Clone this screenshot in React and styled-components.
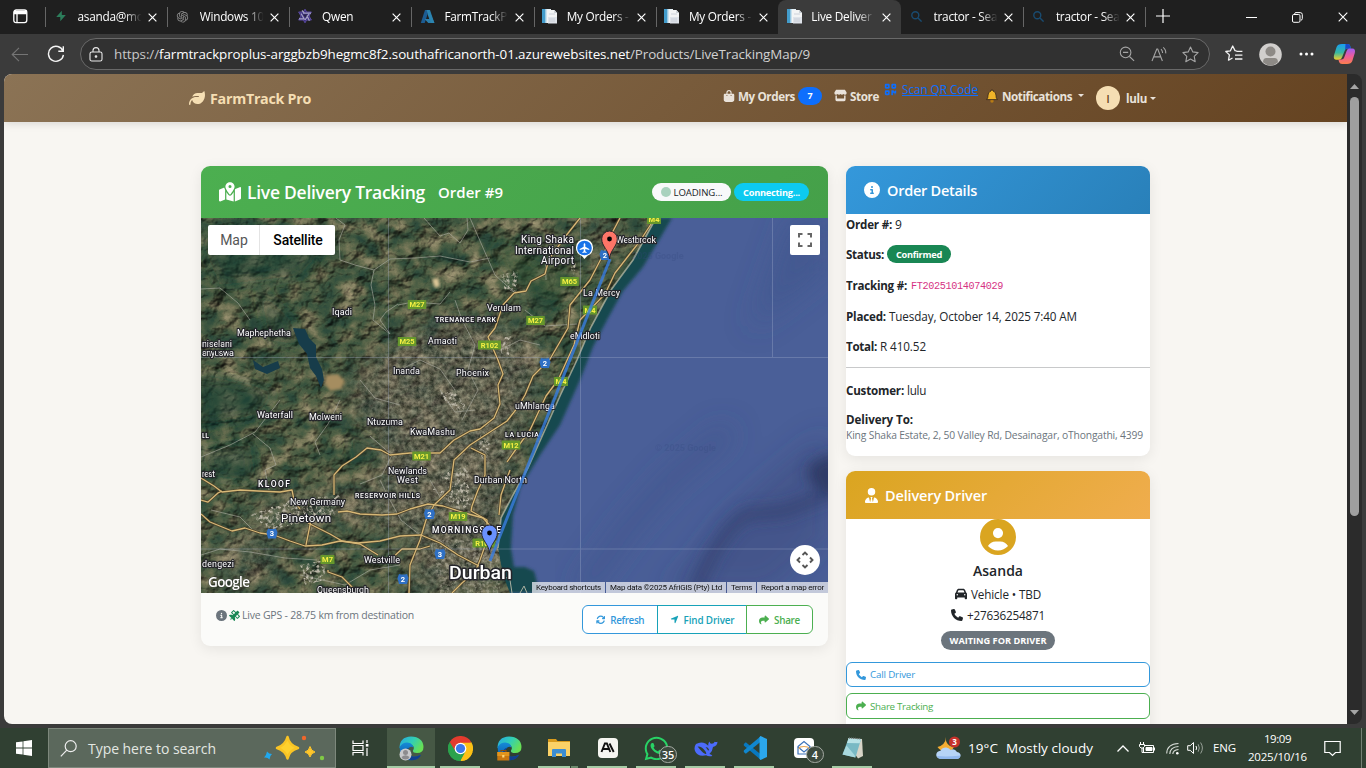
import React, { useLayoutEffect, useRef, useState } from 'react';
import styled, { createGlobalStyle } from 'styled-components';
import {
  FaLeaf, FaBagShopping, FaStore, FaQrcode, FaMapLocationDot, FaCircleInfo, FaUserTie,
  FaCircleUser, FaCar, FaPhone, FaShare, FaArrowsRotate, FaLocationArrow, FaSatellite, FaWhatsapp,
} from 'react-icons/fa6';
import { AiOutlineOpenAI } from 'react-icons/ai';

const Global = createGlobalStyle`
  * { box-sizing: border-box; }
  html, body { margin: 0; padding: 0; }
  body {
    width: 1366px; height: 768px; overflow: hidden; background: #3b3b3b;
    font-family: "Open Sans", "Noto Sans", sans-serif; font-size: 12px; color: #212529;
  }
  svg { display: block; flex: none; }
`;

/* ---------- text that keeps a given line width ---------- */
const FitBox = styled.span`
  display: inline-block;
  flex: none;
  white-space: nowrap;
  width: ${(p) => p.$w}px;
  font-size: ${(p) => (p.$size ? `${p.$size}px` : 'inherit')};
  font-weight: ${(p) => p.$weight || 'inherit'};
  color: ${(p) => p.$color || 'inherit'};
`;

function Fit({ w, size, weight, color, children }) {
  const ref = useRef(null);
  const [spacing, setSpacing] = useState(0);
  useLayoutEffect(() => {
    const natural = ref.current.getBoundingClientRect().width;
    setSpacing((w - natural) / Math.max(1, String(children).length));
  }, [w, children]);
  return (
    <FitBox $w={w} $size={size} $weight={weight} $color={color}>
      <span ref={ref} style={{ letterSpacing: `${spacing}px` }}>{children}</span>
    </FitBox>
  );
}

/* ---------- browser chrome ---------- */
const Screen = styled.div`
  width: 1366px; height: 768px; display: flex; flex-direction: column; overflow: hidden;
`;
const TabStrip = styled.div`
  height: 34px; background: #1f1f1f; display: flex; align-items: stretch; flex: none;
`;
const TabMenu = styled.div`
  width: 44.5px; padding: 9px 0 0 13px;
`;
const Tab = styled.div`
  width: 122.3px; display: flex; align-items: center; padding: 0 10px 2px 8px; color: #fff;
  position: relative;
  background: ${(p) => (p.$active ? '#3b3b3b' : 'transparent')};
  border-radius: ${(p) => (p.$active ? '8px 8px 0 0' : '0')};
  &::before {
    content: ''; position: absolute; left: 0; top: 7px; width: 1px; height: 20px;
    background: ${(p) => (p.$line ? '#666' : 'transparent')};
  }
`;
const Favicon = styled.div`
  width: 16px; display: flex; justify-content: center; margin-right: 9px;
`;
const TabTitle = styled.div`
  width: 65px; overflow: hidden; white-space: nowrap; font-size: 11.8px; letter-spacing: -0.25px; line-height: 16px;
  mask-image: linear-gradient(90deg, #000 72%, transparent 98%);
`;
const TabClose = styled.div`
  margin-left: auto; padding-top: 2px;
`;
const StripEnd = styled.div`
  flex: 1; display: flex; align-items: center; color: #fff; padding: 0 18px 2px 10px; position: relative;
  border-left: 1px solid #1f1f1f;
  &::before { content: ''; position: absolute; left: -1px; top: 7px; width: 1px; height: 20px; background: #666; }
`;
const WindowButtons = styled.div`
  margin-left: auto; display: flex; align-items: center; gap: 35px; padding-top: 2px;
`;
const Toolbar = styled.div`
  height: 40px; background: #3b3b3b; display: flex; align-items: center; flex: none; padding-left: 11px;
`;
const ReloadIcon = styled.svg`
  margin-left: 19px;
`;
const AddressBar = styled.div`
  width: 1130px; height: 32px; margin: 0 0 0 15px; border: 1px solid #696969; border-radius: 16px; background: #313131;
  display: flex; align-items: center; color: #fff; padding: 0 10px 0 8px;
`;
const BarTools = styled.div`
  margin-left: auto; display: flex; align-items: center; gap: 15px;
`;
const ToolbarEnd = styled.div`
  display: flex; align-items: center; padding-left: 15px;
  & > :nth-child(2) { margin-left: 15px; }
  & > :nth-child(3) { margin-left: 17px; }
  & > :nth-child(4) { margin-left: 19px; }
`;
const UrlText = styled.div`
  display: flex; margin-left: 11px; padding-bottom: 1px;
`;
const Window = styled.div`
  height: 650px; margin: 0 4px; border-radius: 8px; overflow: hidden; display: flex; flex: none;
`;
const Page = styled.div`
  width: 1343px; background: #f8f6f2; overflow: hidden;
`;
const Scrollbar = styled.div`
  width: 15px; background: #2b2b2b; display: flex; flex-direction: column; align-items: center; justify-content: space-between;
  padding: 10px 0 9px;
`;
const ScrollThumb = styled.div`
  width: 9px; height: 419px; margin: 8px 0 auto; border-radius: 5px; background: #9f9f9f;
`;

const CloseX = ({ size = 9, w = 1.3 }) => (
  <svg width={size} height={size} viewBox="0 0 10 10" stroke="#fff" strokeWidth={w} fill="none"><path d="M.7 .7 9.3 9.3M9.3 .7.7 9.3" /></svg>
);
const DocIcon = () => (
  <svg width="17" height="17" viewBox="0 0 17 17">
    <path d="M1 1h9v14H1z" fill="#e6f1f7" /><path d="M1 1h3.6v14H1z" fill="#439ccb" /><path d="M4.6 1h1v14h-1z" fill="#b8d8e8" />
    <path d="M6 2h7.5l2.5 3v10H6z" fill="#f3f4f5" /><path d="M13.2 2v3H16z" fill="#c6ccd2" />
    <path d="M7 9h9v6.5H7z" fill="#dfe3ea" /><path d="M8 6h6M8 11h6M8 13h6" stroke="#c3c9d3" strokeWidth=".8" />
  </svg>
);
const SupaIcon = () => (
  <svg width="12" height="12" viewBox="0 0 12 12"><path d="M6.8.8v4.3h4L5.3 11.2V6.9H1.2z" fill="#2c7d5b" /></svg>
);
const QwenIcon = () => (
  <svg width="16" height="16" viewBox="0 0 16 16" fill="none" strokeLinejoin="round">
    <path d="M8 1.2 9.6 4h4.8L12 8l2.4 4H9.6L8 14.8 6.4 12H1.6L4 8 1.6 4h4.8z" fill="#3d3080" stroke="#5b4aa0" strokeWidth="1" />
    <path d="M5 2.5 7.6 5.400M14 5.2H6M12.4 12.7 9.800 7.500M2 10.8h5M4 5.500l3.5 6M8 12l4-6" stroke="#a5a1c4" strokeWidth="1.3" />
    <path d="M6.2 6.500h4L8.2 9.6z" fill="#2b2744" />
  </svg>
);
const AzureIcon = () => (
  <svg width="15" height="15" viewBox="0 0 15 15"><path d="M5 1h4L4.7 14H.8z" fill="#1c5c92" /><path d="M9 1h1l4.4 13H8.3L4.6 10h4.7L7.7 5.5z" fill="#2a7dab" /><path d="M6.5 1H9l5.4 13h-3.2z" fill="#2c85b0" /></svg>
);
const LoupeIcon = ({ size = 11, color = '#194b70', w = 1.4 }) => (
  <svg width={size} height={size} viewBox="0 0 11 11" fill="none" stroke={color} strokeWidth={w}><circle cx="4.3" cy="4.3" r="3.5" /><path d="m7 7 3.6 3.6" /></svg>
);
const Star = ({ size = 17, color = '#a5a5a5' }) => (
  <svg width={size} height={size} viewBox="0 0 17 17" fill="none" stroke={color} strokeWidth="1.1" strokeLinejoin="round"><path d="m8.5 1 2.3 4.9 5.3.7-3.9 3.7 1 5.4-4.7-2.6-4.7 2.6 1-5.4L.9 6.6l5.3-.7z" /></svg>
);

const TABS = [
  ['asanda@mo', SupaIcon], ['Windows 10', () => <AiOutlineOpenAI size={15} color="#858585" />], ['Qwen', QwenIcon],
  ['FarmTrackP', AzureIcon], ['My Orders -', DocIcon], ['My Orders -', DocIcon],
  ['Live Deliver', DocIcon], ['tractor - Sea', LoupeIcon], ['tractor - Sea', LoupeIcon],
];

function BrowserChrome() {
  return (
    <>
      <TabStrip>
        <TabMenu>
          <svg width="15" height="15" viewBox="0 0 15 15" fill="none" stroke="#fff" strokeWidth="1.3"><rect x=".8" y="1" width="13" height="12.6" rx="2.4" /><path d="M1 2.8h12.7M1 4.3h12.7" strokeWidth="2" /><path d="M4 4v9.5" /></svg>
        </TabMenu>
        {TABS.map(([title, Icon], i) => (
          <Tab key={i} $active={i === 6} $line={i !== 6 && i !== 7}>
            <Favicon><Icon /></Favicon><TabTitle>{title}</TabTitle><TabClose><CloseX /></TabClose>
          </Tab>
        ))}
        <StripEnd>
          <svg width="14" height="14" viewBox="0 0 14 14" stroke="#fff" strokeWidth="1.2"><path d="M7 0v14M0 7h14" /></svg>
          <WindowButtons>
            <svg width="11" height="11" viewBox="0 0 11 11" stroke="#fff"><path d="M0 5.5h11" /></svg>
            <svg width="11" height="11" viewBox="0 0 11 11" fill="none" stroke="#fff"><rect x=".5" y="2.5" width="7.5" height="7.8" rx="1.3" /><path d="M2.6 2.4V1.8Q2.7.6 4 .6h4.2Q10.3.6 10.3 2.6v4Q10.3 8 9 8.2" /></svg>
            <CloseX size={10} w={1.1} />
          </WindowButtons>
        </StripEnd>
      </TabStrip>
      <Toolbar>
        <svg width="17" height="15" viewBox="0 0 17 15" fill="none" stroke="#757575" strokeWidth="1.1"><path d="M17 7.5H1.2M8 .8 1.2 7.5 8 14.2" /></svg>
        <ReloadIcon width="18" height="18" viewBox="0 0 18 18" fill="none" stroke="#f4f4f4" strokeWidth="1.4"><path d="M16 6.2A7.5 7.5 0 1 0 16.4 9.8M16.3 1.2v5h-5" /></ReloadIcon>
        <AddressBar>
          <svg width="14" height="15" viewBox="0 0 14 15" fill="none" stroke="#e8e8e8" strokeWidth="1.1"><rect x="1" y="5" width="12" height="9" rx="1.8" /><path d="M4 5V3.6a3 3 0 0 1 6 0V5" /><circle cx="7" cy="9.5" r=".8" fill="#fff" /></svg>
          <UrlText>
            <Fit w={45} size={13.4} color="#c8c8c8">https://</Fit>
            <Fit w={471} size={13.4}>farmtrackproplus-arggbzb9hegmc8f2.southafricanorth-01.azurewebsites.net</Fit>
            <Fit w={180} size={13.4} color="#d2d2d2">/Products/LiveTrackingMap/9</Fit>
          </UrlText>
          <BarTools>
            <svg width="16" height="16" viewBox="0 0 16 16" fill="none" stroke="#a5a5a5" strokeWidth="1.1"><circle cx="6.6" cy="6.4" r="5.3" /><path d="m10.5 10.5 4.6 4.4M4 6.4h5.2" /></svg>
            <svg width="17" height="17" viewBox="0 0 17 17" fill="none" stroke="#a5a5a5" strokeWidth="1.1"><path d="M2 15 6.800 3h.9l4.7 12M3.7 10.9h7M11 3.2q1.6 1.6 1.6 3.8M13.2 1.4q3 2.4 2.5 6" /></svg>
            <Star />
          </BarTools>
        </AddressBar>
        <ToolbarEnd>
          <svg width="19" height="18" viewBox="0 0 19 18" fill="none" stroke="#f3f3f3" strokeWidth="1.3" strokeLinejoin="round"><path d="M11.5 5.8 10 5.6 7.7 1 5.4 5.8.8 6.5l3.6 3.4-.9 5.3 4-2.2M11.4 6.4h6M10 10.2h7.4M10 14h7.4" /></svg>
          <svg width="23" height="23" viewBox="0 0 23 23"><circle cx="11.5" cy="11.5" r="11.3" fill="#d1cfcd" /><circle cx="11.5" cy="8.5" r="5" fill="#8d8a86" /><path d="M4 19.2q.2-4.2 3.4-4.2h8.2q3.2 0 3.4 4.2-7.5 6.5-15 0z" fill="#8d8a86" /></svg>
          <svg width="15" height="4" viewBox="0 0 15 4" fill="#fff"><circle cx="2" cy="2" r="1.5" /><circle cx="7.5" cy="2" r="1.5" /><circle cx="13" cy="2" r="1.5" /></svg>
          <svg width="23" height="22" viewBox="0 0 23 22">
            <defs>
              <linearGradient id="copA" x1="0" y1="0" x2="0" y2="1"><stop offset="0" stopColor="#189ef2" /><stop offset=".55" stopColor="#38b8a0" /><stop offset="1" stopColor="#f1cf2c" /></linearGradient>
              <linearGradient id="copB" x1="0" y1="0" x2="0" y2="1"><stop offset="0" stopColor="#a05cf2" /><stop offset=".5" stopColor="#ee5c9a" /><stop offset="1" stopColor="#fb7e4d" /></linearGradient>
            </defs>
            <path d="M9 1h5.6q2.2 0 2.6 2l.6 2.6h-3.4q-2.1 0-2.8 2.4L9.2 14q-.8 2.7-3 2.7H3.6Q0 16.7 1 12.2L3.6 4Q4.6 1 9 1z" fill="url(#copA)" />
            <path d="M12.5 1h2.4q1.8 0 2.3 2l.7 2.6h-3.5q-1.7 0-2.3 1.6z" fill="#1948c8" />
            <path d="M14 21H9q-2.3 0-2.9-2l-.7-2.4h3.2q2 0 2.7-2.4l2.3-6.3q.9-2.4 3-2.4h2.7q3.5 0 2.5 4.5L19.3 18q-1 3-5.3 3z" fill="url(#copB)" />
          </svg>
        </ToolbarEnd>
      </Toolbar>
    </>
  );
}

/* ---------- site navigation ---------- */
const Navbar = styled.nav`
  height: 48px; padding: 0 191px 0 185px; display: flex; align-items: center;
  background: linear-gradient(135deg, #8b7355, #654321); box-shadow: 0 2px 8px rgba(0,0,0,.12);
`;
const Brand = styled.div`
  display: flex; align-items: center; gap: 5px; color: #f5deb3; font-weight: 700; margin-right: auto;
`;
const NavItem = styled.div`
  display: flex; align-items: center; color: #e9e2da; font-weight: 700; font-size: 11.7px; gap: ${(p) => p.$gap ?? 3}px;
  margin: ${(p) => p.$m || '0'};
`;
const CountBadge = styled.span`
  width: 24px; height: 18px; border-radius: 9px; background: #0d6efd; color: #fff; font-size: 9px; font-weight: 700;
  display: flex; align-items: center; justify-content: center;
`;
const ScanLink = styled.a`
  display: flex; align-items: center; gap: 5px; color: #0d6efd; margin: -18px 8px 0 5px; text-decoration: underline;
`;
const Avatar = styled.span`
  width: 24px; height: 24px; border-radius: 50%; background: #f5deb3; color: #654321; display: flex; align-items: center; justify-content: center;
  font-size: 11px; font-weight: 600;
`;
const Caret = styled.i`
  border: 3px solid transparent; border-top-color: currentColor; border-bottom: 0; margin-left: ${(p) => p.$ml}px;
`;

function SiteNav() {
  return (
    <Navbar>
      <Brand><FaLeaf size={16} /><Fit w={101} size={14.3}>FarmTrack Pro</Fit></Brand>
      <NavItem $m="-5px 0 0"><FaBagShopping size={12} /><Fit w={57}>My Orders</Fit><CountBadge>7</CountBadge></NavItem>
      <NavItem $m="-5px 0 0 12px"><FaStore size={13} /><Fit w={29}>Store</Fit></NavItem>
      <ScanLink><FaQrcode size={13} /><Fit w={76} size={11.8}>Scan QR Code</Fit></ScanLink>
      <NavItem $m="-5px 12px 0 0" $gap={4}>
        <svg width="12" height="14" viewBox="0 0 12 14"><circle cx="6" cy="12" r="1.7" fill="#b87c15" /><path d="M5.2 1h1.6l.2 1q3.2.8 3 4.6-.1 2.6 1.5 4H.5Q2.1 9.200 2 6.600 1.800 2.800 5 2z" fill="#f0b429" stroke="#33261a" strokeWidth=".8" /></svg>
        <Fit w={70}>Notifications</Fit><Caret $ml={2} />
      </NavItem>
      <NavItem $gap={6}><Avatar>l</Avatar><Fit w={21} size={11.6}>lulu</Fit><Caret $ml={-3} /></NavItem>
    </Navbar>
  );
}

/* ---------- cards ---------- */
const Content = styled.main`
  display: flex; gap: 18px; align-items: flex-start; padding: 44px 0 0 197px;
`;
const Card = styled.section`
  width: ${(p) => p.$w}px; height: ${(p) => p.$h}px; background: ${(p) => p.$bg || '#fff'}; border-radius: 9px; overflow: hidden; flex: none;
  box-shadow: 0 3px 14px rgba(0,0,0,.08);
`;
const CardHeader = styled.header`
  height: ${(p) => p.$h}px; padding: 0 19px 0 18px; display: flex; align-items: center; color: #fff; font-weight: 600;
  background: linear-gradient(135deg, ${(p) => p.$from}, ${(p) => p.$to}); gap: ${(p) => p.$gap || 7}px;
`;
const OrderTag = styled.span`
  margin-left: 7px;
`;
const Pill = styled.span`
  height: ${(p) => p.$h || 18}px; width: ${(p) => p.$w}px; border-radius: 10px; background: ${(p) => p.$bg}; color: ${(p) => p.$fg || '#fff'};
  display: inline-flex; align-items: center; justify-content: center; font-size: 9.2px; font-weight: 700; gap: 3px; flex: none;
`;
const PillRow = styled.div`
  margin-left: auto; display: flex; gap: 3px;
`;
const Dot = styled.i`
  width: 10px; height: 10px; border-radius: 50%; background: #a9d2be;
`;
const MapFooter = styled.footer`
  display: flex; justify-content: space-between; align-items: flex-start; padding: 12px 15px;
`;
const GpsNote = styled.div`
  display: flex; align-items: center; gap: 2px; color: #6c757d; margin-top: 2px; line-height: 16px;
`;
const ButtonGroup = styled.div`
  display: flex;
  & > :first-child { border-radius: 6px 0 0 6px; }
  & > :last-child { border-radius: 0 6px 6px 0; }
  & > * + * { margin-left: -1px; }
`;
const GroupButton = styled.button`
  font: 600 9.900px "Open Sans", sans-serif; height: 29px; width: ${(p) => p.$w}px; background: #fff; color: ${(p) => p.$c}; border: 1px solid ${(p) => p.$c};
  display: flex; align-items: center; justify-content: center; gap: 5px; padding: 0;
`;

/* ---------- satellite map ---------- */
const MapFrame = styled.div`
  position: relative; width: 627px; height: 375px; overflow: hidden; font-family: Roboto, sans-serif;
`;
const MapType = styled.div`
  position: absolute; left: 7px; top: 7px; display: flex; height: 30px; background: #fff; border-radius: 2px; font-size: 14px; line-height: 30px;
`;
const MapTypeOption = styled.div`
  width: ${(p) => p.$w}px; text-align: center; color: ${(p) => (p.$on ? '#000' : '#565656')}; font-weight: ${(p) => (p.$on ? 500 : 400)};
  padding-left: 1px; border-left: ${(p) => (p.$on ? '1px solid #e4e4e4' : '0')}; letter-spacing: ${(p) => (p.$on ? '-.2px' : '0')};
`;
const MapButton = styled.div`
  position: absolute; right: 8px; ${(p) => (p.$round ? 'bottom: 18px; border-radius: 50%;' : 'top: 7px; border-radius: 2px;')}
  width: 30px; height: 30px; background: #fff; display: flex; align-items: center; justify-content: center;
`;
const MapCredits = styled.div`
  position: absolute; right: 0; bottom: 0; height: 11px; display: flex; gap: 1px; color: #111; font-size: 8px; line-height: 11px;
`;
const Credit = styled.span`
  background: rgba(225,228,235,.8); width: ${(p) => p.$w}px; display: flex; justify-content: center;
`;

const PLACES = [
  [521, 243, 'King Shaka', 53, 10], [515, 253.500, 'International', 59, 10], [541, 264, 'Airport', 33, 10],
  [616, 242.500, 'Westbrook', 40, 9], [583, 296, 'La Mercy', 37, 9], [487, 310.500, 'Verulam', 34, 9], [570, 338.500, 'eMdloti', 30, 9],
  [332, 314.500, 'Iqadi', 20, 9], [237, 335.500, 'Maphephetha', 54, 9], [202, 346.500, 'niselani', 30, 9], [202, 355.500, 'anyuswa', 32, 9],
  [428, 344, 'Amaoti', 29, 9], [393, 374, 'Inanda', 27, 9], [456, 376, 'Phoenix', 33, 9], [257, 418, 'Waterfall', 36, 9],
  [309, 420, 'Molweni', 33, 9], [367, 425, 'Ntuzuma', 36, 9], [410, 434.500, 'KwaMashu', 45, 9], [515, 408.500, 'uMhlanga', 40, 9],
  [388, 474, 'Newlands', 39, 9], [397, 483, 'West', 21, 9], [474, 483, 'Durban North', 53, 9], [290, 505, 'New Germany', 55, 9],
  [281, 522, 'Pinetown', 50, 11.5], [364, 563, 'Westville', 36, 9], [202, 566.500, 'dengezi', 32, 9], [317, 593, 'Queensburgh', 52, 9],
  [202, 476.500, 'rest', 13, 8.5],
];
const SUBURBS = [
  [435, 322, 'TRENANCE PARK', 61, 7], [505, 437, 'LA LUCIA', 34, 7], [258, 487, 'KLOOF', 32, 8.5], [355, 498, 'RESERVOIR HILLS', 65, 7], [432, 532.500, 'MORNINGSIDE', 69, 8.5], [202, 438, 'LL', 7, 7],
];
const SHIELDS = [
  [417, 304.500, 'M27'], [407, 341.500, 'M25'], [489.500, 345, 'R102'], [569.500, 281.500, 'M65'], [535.500, 320.500, 'M27'], [590, 310, 'M4'], [561, 381.500, 'M4'],
  [654, 219.500, 'M4'], [511, 445, 'M12'], [421.500, 456, 'M21'], [458, 516.500, 'M19'], [327.500, 559.500, 'M7'], [484, 543, 'R102'],
];
const NATIONAL = [[605, 255, 2], [545, 363, 2], [429.500, 514, 2], [272, 533.500, 3], [440, 554, 3], [403, 579, 2]];

const MAJOR = [
  'M201 478 214 486 222 492 240 490 258 491 280 492 292 490 294 500 300 509',
  'M201 500 208 502 218 493 222 491M201 514 210 522 232 531 245 528 260 533 274 535 290 541 305 546 322 545 340 541 358 543 380 541 400 536 421 535 440 543 458 555 479 566 493 575',
  'M308 523 330 534 342 541 360 544 378 555M311 520 306 545M338 512 347 511 360 514 382 515 397 514 410 509 428 504 443 506 465 513 483 518 494 530',
  'M334 495 334 475 342 466 356 457 367 448 381 450 390 455 410 453 440 453 454 440 470 431 480 429 494 418 500 404 498 385 503 374 498 360 488 337 495 328 503 305 514 293',
  'M514 293 526 291 531 281 545 274 549 259 565 237 580 218M409 593 410 565 420 540 426 520 434 505 450 490 454 460 470 445 490 432 507 421 518 407 525 395 533 376 550 359 568 328 570 305 590 280 604 253 611 235 620 218',
  'M655 218 640 241 615 273 605 294 580 320 574 345 558 380 546 396 530 430 514 452 507 462',
  'M328 570 328 572 342 577 355 590M390 560 402 549 420 549 430 546M471 448 485 455 485 475 478 490 472 506 471 511 487 520 487 540 480 560 475 572 462 583 452 593M510 470 501 495 499 515',
];
const MINOR = [
  'M336 218 345 225 339 240 340 260 355 265 374 270 390 259 415 258 440 256 470 262 490 258',
  'M424 218 440 236 449 233 460 243 468 230 467 218M374 270 371 285 375 305 373 320 390 334',
  'M398 305 413 302 440 304 450 292M390 334 380 320 386 312 398 304M201 289 220 288 238 303 250 320',
  'M455 300 462 320 475 345 468 370 478 390 462 420M280 400 255 432 230 445 201 457',
  'M253 434 270 448 276 465 265 470 269 490M340 400 328 424 315 442 320 455',
  'M470 218 484 250 495 275 515 293M530 240 545 250 546 280M525 310 545 326 577 324M500 350 520 340 540 345',
  'M211 510 240 517 253 530M201 555 220 549 250 552 285 558 317 560M300 575 345 585 370 570 400 565M430 480 440 497M380 480 390 500 401 520 420 535',
  'M440 390 455 412 475 410M360 380 375 398 400 405M400 370 420 360 440 369 455 390M370 436 392 455 382 475 360 484',
];
const LAND = 'M201 218H656L633 260 611 290 591 327 577 360 560 396 544 432 528 468 513 495 501 518 498 548 503 575 510 593H201z';
const SHALLOW = 'M201 218H672L662 235 643 267 623 291 607 320 593 347 580 380 560 425 540 455 520 488 513 515 511 548 514 567 525 567 534 571 540 593H201z';

const Shield = ({ x, y, label }) => {
  const w = label.length * 4.500 + 5;
  return (
    <g>
      <rect x={x - w / 2} y={y - 4.500} width={w} height="9" rx=".6" fill="#66972d" />
      <text x={x} y={y + 2.800} textAnchor="middle" fontSize="7.500" fontWeight="700" fill="#f4ef42">{label}</text>
    </g>
  );
};
const Pin = ({ x, y, fill }) => (
  <g transform={`translate(${x} ${y})`}>
    <path d="M0 0C-1-9.500-7.800-12.500-7.800-20.200A7.800 7.800 0 0 1 7.800-20.200C7.800-12.500 1-9.500 0 0z" fill={fill} stroke="#26262a" strokeWidth="1" />
    <circle cy="-20" r="2.400" fill="#000" />
  </g>
);

function SatelliteMap() {
  return (
    <svg width="627" height="375" viewBox="201 218 627 375">
      <defs>
        <filter id="terrain" x="0" y="0" width="1" height="1" colorInterpolationFilters="sRGB">
          <feTurbulence type="fractalNoise" baseFrequency=".05 .06" numOctaves="6" seed="12" result="n" />
          <feColorMatrix in="n" values="1.100 .5 0 0 -.34  1.100 .5 0 0 -.34  1.100 .5 0 0 -.34  0 0 0 0 1" result="g" />
          <feComponentTransfer in="g" result="c">
            <feFuncR type="table" tableValues=".13 .16 .22 .30 .40 .50 .60" />
            <feFuncG type="table" tableValues=".23 .26 .30 .345 .405 .48 .55" />
            <feFuncB type="table" tableValues=".19 .205 .22 .25 .30 .37 .43" />
          </feComponentTransfer>
          <feDiffuseLighting in="n" surfaceScale="6" diffuseConstant="1.150" lightingColor="#fff" result="l">
            <feDistantLight azimuth="225" elevation="58" />
          </feDiffuseLighting>
          <feComposite in="c" in2="l" operator="arithmetic" k1="1.150" />
          <feColorMatrix values="1 0 0 0 0 0 1 0 0 0 0 0 1 0 0 0 0 0 0 1" />
        </filter>
        <filter id="urban" x="0" y="0" width="1" height="1" colorInterpolationFilters="sRGB">
          <feTurbulence type="fractalNoise" baseFrequency=".2" numOctaves="4" seed="5" />
          <feColorMatrix values=".9 0 0 0 -.03  .85 0 0 0 -.030  .75 0 0 0 -.030  0 0 0 0 1" result="u" />
          <feComposite in="u" in2="SourceAlpha" operator="in" />
        </filter>
        <filter id="speck" x="0" y="0" width="1" height="1" colorInterpolationFilters="sRGB">
          <feTurbulence type="fractalNoise" baseFrequency=".3" numOctaves="3" seed="30" />
          <feColorMatrix values="0 0 0 0 .74 0 0 0 0 .72 0 0 0 0 .66 3.600 0 0 0 -1.650" result="s" />
          <feComposite in="s" in2="SourceAlpha" operator="in" />
        </filter>
        <filter id="soft"><feGaussianBlur stdDeviation="14" /></filter>
        <filter id="soft2"><feGaussianBlur stdDeviation="7" /></filter>
        <filter id="soft1" x="-10%" y="-10%" width="120%" height="120%"><feGaussianBlur stdDeviation="1.600" /></filter>
        <mask id="urbanMask" maskUnits="userSpaceOnUse" x="201" y="218" width="627" height="375">
          <g filter="url(#soft)" fill="#fff">
            <path d="M370 360 440 320 500 325 545 350 520 440 505 520 500 593 400 593 420 540 350 515 260 525 255 505 380 490 380 440 345 400z" opacity=".62" />
            <circle cx="250" cy="560" r="32" opacity=".35" /><circle cx="600" cy="240" r="22" opacity=".3" />
          </g>
        </mask>
        <clipPath id="land"><path d={LAND} /></clipPath>
      </defs>
      <rect x="201" y="218" width="627" height="375" fill="#4a5f98" />
      <g filter="url(#soft)">
        <path d="M828 430 800 450 770 475 725 515 690 560 660 593 770 593 828 540z" fill="#35436d" opacity=".3" />
        <path d="M750 330 828 270V218H790z" fill="#3d5189" opacity=".5" />
        <path d="M580 593 630 525 670 480 730 430" stroke="#3c4f85" strokeWidth="16" fill="none" opacity=".5" />
      </g>
      <g filter="url(#soft2)">
        <path d="M690 600 712 555 730 528 745 515 785 511 835 492" stroke="#2e3d66" strokeWidth="13" fill="none" opacity=".55" />
        <path d="M840 450 812 462 806 475 818 490 840 495z" fill="#263258" opacity=".75" />
      </g>
      <path d={SHALLOW} fill="#174950" filter="url(#soft1)" />
      <g clipPath="url(#land)">
        <rect x="201" y="218" width="470" height="375" filter="url(#terrain)" />
        <g mask="url(#urbanMask)"><rect x="201" y="218" width="470" height="375" filter="url(#urban)" /></g>
        <g filter="url(#soft2)">
          <path d="M201 375 250 385 275 393 255 415 201 425zM350 430 380 450 355 462zM260 290 290 320 300 345 270 340zM201 240 260 225 330 240 300 275 220 285zM201 450 250 445 255 480 210 475zM540 290 560 300 545 320 520 300z" fill="#173e31" opacity=".5" />
          <path d="M490 245 550 265 580 275 560 300 520 285z" fill="#274f34" opacity=".5" />
        </g>
        <path d="M293 328 305 329 309 338 316 345 316 357 322 369 324 380 321 388 316 376 310 368 307 354 299 344zM253 360 263 367 278 361 280 368 267 374 255 369z" fill="#173c4a" />
        <path d="M326 375 338 374 345 381 341 389 330 391 325 384z" fill="#a58d60" filter="url(#soft1)" />
        <path d="M432 279 438 278 440 286 435 288z" fill="#e0c99a" filter="url(#soft1)" />
        <g filter="url(#speck)">
          <path d="M440 392 455 392 465 405 462 415 448 405zM480 435 490 442 486 465 478 450zM250 515 290 500 340 495 335 515 270 530zM500 275 518 270 516 292 505 290zM505 337 512 336 509 355 500 353zM570 268 576 262 574 275zM300 565 325 560 325 580 305 585zM440 475 468 465 470 495 460 505zM430 488 480 500 460 510z" />
          <path d="M430 540 500 540 500 593 440 593z" opacity=".5" />
        </g>
        <g fill="none" stroke="#b4b4aa" strokeWidth=".9" opacity=".62">{MINOR.map((d) => <path key={d} d={d} />)}</g>
        <g fill="none" strokeLinejoin="round">
          {MAJOR.map((d) => <path key={d} d={d} stroke="#4d422b" strokeWidth="2.600" />)}
          {MAJOR.map((d) => <path key={d} d={d} stroke="#d6b877" strokeWidth="1.300" />)}
        </g>
      </g>
      <path d="M656 218 633 260 611 290 591 327 577 360 560 396 544 432 528 468 513 495 501 518 498 548" fill="none" stroke="#b7b9a6" strokeWidth="1.600" opacity=".75" />
      <path d="M502 575 510 580 512 593M520 593 524 586 527 593" fill="none" stroke="#aab0a1" />
      <path d="M388.500 218V593M580.500 218V593M772.500 218V357M201 357.500H828M201 549H828" stroke="#a9b4cf" opacity=".32" />
      <g fill="#34487e" fontSize="9" fontWeight="700" opacity=".25">
        <text x="632" y="259">2025 Google</text><text x="655" y="451">© 2025 Google</text><text x="806" y="498">© 20</text>
      </g>
      {SHIELDS.map(([x, y, l], i) => <Shield key={i} x={x} y={y} label={l} />)}
      {NATIONAL.map(([x, y, l], i) => (
        <g key={i}>
          <path d={`M${x - 4} ${y - 5}Q${x} ${y - 4} ${x + 4} ${y - 5}L${x + 5.500} ${y - 1} ${x + 4} ${y + 5}H${x - 4}L${x - 5.500} ${y - 1}z`} fill="#2f70c4" />
          <text x={x} y={y + 2.800} textAnchor="middle" fontSize="7.500" fontWeight="700" fill="#fff">{l}</text>
        </g>
      ))}
      <g fill="#fff" stroke="#25252b" strokeWidth="2.300" strokeLinejoin="round" paintOrder="stroke">
        {PLACES.map(([x, y, t, w, s]) => <text key={t} x={x} y={y} fontSize={s} textLength={w}>{t}</text>)}
        {SUBURBS.map(([x, y, t, w, s]) => <text key={t} x={x} y={y} fontSize={s} fontWeight="500" textLength={w}>{t}</text>)}
        <text x="449" y="579" fontSize="19" fontWeight="500" textLength="63" lengthAdjust="spacingAndGlyphs" strokeWidth="3">Durban</text>
      </g>
      <path d="M584.500 239a8.600 8.600 0 0 1 8.600 8.600q0 6-6 8.400l-2.600 3-2.600-3q-6-2.400-6-8.400a8.600 8.600 0 0 1 8.600-8.600z" fill="#fff" />
      <circle cx="584.500" cy="248" r="7.300" fill="#1a73e8" />
      <path d="m584.500 243 .8 1v2.700l4 2.300v1.100l-4-1.200v2.300l1.300 1v.8l-2.100-.6-2.100.6v-.8l1.300-1v-2.300l-4 1.200V249l4-2.300V244z" fill="#fff" />
      <path d="M610 259 490 561" stroke="#387ddd" strokeWidth="3" strokeOpacity=".82" />
      <Pin x={609.500} y={259} fill="#fd7567" />
      <Pin x={489.500} y={553} fill="#6991fd" />
      <text x="208" y="587" fontFamily="Open Sans" fontSize="13.500" fontWeight="600" textLength="42" fill="#fff" stroke="#3c4037" strokeWidth="1" paintOrder="stroke">Google</text>
    </svg>
  );
}

function TrackingCard() {
  return (
    <Card $w={627} $h={480} $bg="#fbfbf9">
      <CardHeader $h={52} $gap={6} $from="#4caf50" $to="#45a049">
        <FaMapLocationDot size={22} />
        <Fit w={178} size={17.500}>Live Delivery Tracking</Fit>
        <OrderTag><Fit w={65} size={15}>Order #9</Fit></OrderTag>
        <PillRow>
          <Pill $w={79} $bg="#f8f9fa" $fg="#212529"><Dot /><Fit w={49} weight={400} size={9.600}>LOADING...</Fit></Pill>
          <Pill $w={75} $bg="#0dcaf0"><Fit w={57}>Connecting...</Fit></Pill>
        </PillRow>
      </CardHeader>
      <MapFrame>
        <SatelliteMap />
        <MapType><MapTypeOption $w={51}>Map</MapTypeOption><MapTypeOption $on $w={76}>Satellite</MapTypeOption></MapType>
        <MapButton><svg width="14" height="14" viewBox="0 0 14 14" fill="none" stroke="#666" strokeWidth="2"><path d="M1 4.500V1h3.500M9.500 1H13v3.500M13 9.500V13H9.500M4.500 13H1V9.500" /></svg></MapButton>
        <MapButton $round><svg width="18" height="18" viewBox="0 0 18 18" fill="none" stroke="#555" strokeWidth="1.900"><path d="M6.500 4 9 1.500 11.500 4M6.500 14 9 16.500 11.500 14M4 6.500 1.500 9 4 11.500M14 6.500 16.500 9 14 11.500" /></svg></MapButton>
        <MapCredits>
          <Credit $w={73}><Fit w={65}>Keyboard shortcuts</Fit></Credit>
          <Credit $w={120}><Fit w={112}>Map data ©2025 AfriGIS (Pty) Ltd</Fit></Credit>
          <Credit $w={29}><Fit w={21}>Terms</Fit></Credit>
          <Credit $w={71}><Fit w={63}>Report a map error</Fit></Credit>
        </MapCredits>
      </MapFrame>
      <MapFooter>
        <GpsNote>
          <FaCircleInfo size={11} /><FaSatellite size={11} color="#198754" />
          <Fit w={172} size={10.500}>Live GPS - 28.75 km from destination</Fit>
        </GpsNote>
        <ButtonGroup>
          <GroupButton $w={76} $c="#3498db"><FaArrowsRotate size={9.500} /><Fit w={34}>Refresh</Fit></GroupButton>
          <GroupButton $w={90} $c="#17a2b8"><FaLocationArrow size={9} /><Fit w={51}>Find Driver</Fit></GroupButton>
          <GroupButton $w={67} $c="#4caf50"><FaShare size={10} /><Fit w={26}>Share</Fit></GroupButton>
        </ButtonGroup>
      </MapFooter>
    </Card>
  );
}

/* ---------- side column ---------- */
const Side = styled.aside`
  display: flex; flex-direction: column; gap: 15px;
`;
const Row = styled.div`
  display: flex; align-items: center; gap: 3px; height: ${(p) => p.$h || 20}px; margin-bottom: ${(p) => p.$mb ?? 10}px;
`;
const Rule = styled.hr`
  border: 0; border-top: 1px solid #c8c9ca; margin: 11px 0 12px;
`;
const Code = styled.code`
  font-family: "Liberation Mono", monospace; font-size: 10.200px; color: #d63384; padding: 2px 0 0 1px;
`;
const DriverBody = styled.div`
  display: flex; flex-direction: column; align-items: center;
`;
const DriverName = styled.div`
  font-size: 14px; font-weight: 600; line-height: 20px; margin-top: 6px;
`;
const DriverLine = styled.div`
  display: flex; align-items: center; gap: 4px; line-height: 18px; margin-top: ${(p) => p.$mt}px;
`;
const WideButton = styled.button`
  font: 500 9.800px "Open Sans", sans-serif; width: 304px; height: ${(p) => p.$h}px; margin-top: ${(p) => p.$mt}px; padding: 0 9px; border-radius: 6px;
  color: ${(p) => p.$c}; border: 1px solid ${(p) => p.$c}; background: #fff; display: flex; align-items: center; gap: 4px;
`;

function OrderCard() {
  return (
    <Card $w={304} $h={290}>
      <CardHeader $h={48} $from="#3498db" $to="#2980b9"><FaCircleInfo size={16} /><Fit w={90} size={14.500}>Order Details</Fit></CardHeader>
      <Row><Fit w={46} weight={700} size={11.600}>Order #:</Fit><Fit w={6}>9</Fit></Row>
      <Row $mb={11}><Fit w={38} weight={700} size={11.600}>Status:</Fit><Pill $w={64} $bg="#198754"><Fit w={46}>Confirmed</Fit></Pill></Row>
      <Row $mb={11}><Fit w={61} weight={700} size={11.600}>Tracking #:</Fit><Code><Fit w={92}>FT20251014074029</Fit></Code></Row>
      <Row><Fit w={40} weight={700} size={11.600}>Placed:</Fit><Fit w={188} size={11.700}>Tuesday, October 14, 2025 7:40 AM</Fit></Row>
      <Row><Fit w={31} weight={700} size={11.600}>Total:</Fit><Fit w={46} size={11.700}>R 410.52</Fit></Row>
      <Rule />
      <Row><Fit w={58} weight={700} size={11.600}>Customer:</Fit><Fit w={19} size={11.700}>lulu</Fit></Row>
      <Row $h={18} $mb={0}><Fit w={67} weight={700} size={11.600}>Delivery To:</Fit></Row>
      <Row $h={14}><Fit w={297} size={10.300} color="#6c757d">King Shaka Estate, 2, 50 Valley Rd, Desainagar, oThongathi, 4399</Fit></Row>
    </Card>
  );
}

function DriverCard() {
  return (
    <Card $w={304} $h={290}>
      <CardHeader $h={48} $gap={6} $from="#daa520" $to="#f0ad4e"><FaUserTie size={15} /><Fit w={102} size={14.500}>Delivery Driver</Fit></CardHeader>
      <DriverBody>
        <FaCircleUser size={36} color="#daa520" />
        <DriverName><Fit w={50}>Asanda</Fit></DriverName>
        <DriverLine $mt={4}><FaCar size={12} /><Fit w={70} size={11.700}>Vehicle • TBD</Fit></DriverLine>
        <DriverLine $mt={3}><FaPhone size={12} /><Fit w={78} size={11.700}>+27636254871</Fit></DriverLine>
        <DriverLine $mt={7}><Pill $w={114} $h={19} $bg="#6c757d"><Fit w={97}>WAITING FOR DRIVER</Fit></Pill></DriverLine>
        <WideButton $mt={12} $h={25} $c="#3498db"><FaPhone size={10} /><Fit w={45}>Call Driver</Fit></WideButton>
        <WideButton $mt={6} $h={26} $c="#4caf50"><FaShare size={10} /><Fit w={63}>Share Tracking</Fit></WideButton>
      </DriverBody>
    </Card>
  );
}

/* ---------- desktop taskbar ---------- */
const Taskbar = styled.footer`
  height: 40px; margin-top: 4px; background: #304032; display: flex; align-items: stretch; color: #fff; flex: none;
`;
const StartCell = styled.div`
  width: 48px; display: flex; align-items: center; justify-content: center;
`;
const SearchBox = styled.div`
  width: 288px; border: 1px solid #7d887c; background: #5b685c; display: flex; align-items: center; padding: 0 10px 0 11px; color: #e3e7e2; gap: 11px;
  & > :last-child { margin-left: auto; }
`;
const TaskView = styled.div`
  width: 51px; padding-right: 3px; display: flex; align-items: center; justify-content: center;
`;
const AppCell = styled.div`
  width: ${(p) => (p.$active ? 48 : 49)}px; margin-right: ${(p) => (p.$active ? 1 : 0)}px;
  display: flex; align-items: center; justify-content: center; position: relative;
  background: ${(p) => (p.$active ? '#465845' : 'transparent')};
  &::after {
    content: ''; position: absolute; bottom: 0; left: ${(p) => (p.$active ? 0 : 4)}px; right: ${(p) => (p.$active ? 0 : 5)}px; height: 2px;
    background: ${(p) => (p.$open ? (p.$split ? 'linear-gradient(90deg, #a5cba5 79%, #304032 79% 82%, #6c8a6d 82%)' : '#a5cba5') : 'transparent')};
  }
`;
const AppBadge = styled.span`
  position: absolute; left: ${(p) => p.$x}px; top: 18px; min-width: 18px; height: 17px; border: 1px solid #a5aba4; border-radius: 9px; background: #3c493d;
  font-size: 11px; line-height: 15px; font-weight: 600; text-align: center; padding: 0 1px; z-index: 1;
`;
const Tray = styled.div`
  margin-left: auto; display: flex; align-items: center; position: relative; width: 430px;
`;
const TrayItem = styled.div`
  margin-left: ${(p) => p.$ml || 0}px; display: flex; flex-direction: column; align-items: center; line-height: 18px; flex: none;
`;
const PeekLine = styled.div`
  margin-left: 20px; width: 1px; height: 40px; background: #738074;
`;

const EdgeIcon = ({ extra }) => (
  <svg width="25" height="25" viewBox="0 0 25 25">
    <defs>
      <linearGradient id="edgeTop" x1="0" y1="0" x2="1" y2=".5"><stop offset="0" stopColor="#25a7e5" /><stop offset=".55" stopColor="#32cfb4" /><stop offset="1" stopColor="#67df55" /></linearGradient>
      <linearGradient id="edgeLow" x1="0" y1="0" x2="0" y2="1"><stop offset="0" stopColor="#168bd7" /><stop offset="1" stopColor="#0750a5" /></linearGradient>
    </defs>
    <path d="M.5 12Q.5 1 12 .5 24 1 24.500 11q0 6-6.500 6-4.500 0-4-2.500 2-3-.5-5-4-3-9 0Q.5 11.500.5 12z" fill="url(#edgeTop)" />
    <path d="M.6 11Q4 6 9.500 6.700q4.500.8 4.900 5-1.500-1.500-3.700-.5-3.500 2.400-1.600 6.100 3.400 6 12.900 1.500Q18 25 10.500 24.300.5 22.500.6 11z" fill="url(#edgeLow)" />
    <path d="M10.500 11.500q-6.500 2-3.500 8.500 2 3.500 6 4.300Q20 24.200 22 18.800q-9.500 4.500-12.900-1.500-1.900-3.400 1.400-5.800z" fill="#123f8f" />
    {extra === 'user' && <g><circle cx="6.500" cy="18.500" r="6" fill="#c9c9cb" /><circle cx="6.500" cy="16.500" r="2.500" fill="#8c8b8e" /><path d="M2.500 21q4-3.500 8 0-.8 2.500-4 2.600-3.200-.1-4-2.600z" fill="#8c8b8e" /></g>}
    {extra === 'case' && <g><path d="M4 16v-1.500h5V16" fill="none" stroke="#8b5109" strokeWidth="1.200" /><rect x=".3" y="16" width="12" height="8.500" fill="#c9770f" /><path d="M.3 16h12v4H.3z" fill="#e1941d" /><rect x="5.200" y="19" width="2.200" height="2.500" fill="#ffd477" /></g>}
  </svg>
);
const ChromeIcon = () => (
  <svg width="25" height="25" viewBox="0 0 24 24">
    <path d="M12 12 1.600 6A12 12 0 0 1 22.400 6z" fill="#e33b2e" /><path d="M12 12 22.400 6A12 12 0 0 1 12 24z" fill="#fbc116" /><path d="M12 12V24A12 12 0 0 1 1.600 6z" fill="#2ba24c" />
    <path d="M12 6.400h10.600L17 14.500z" fill="#fbc116" /><path d="M7.200 14.800 1.600 6l9-.5z" fill="#e33b2e" /><path d="m7.100 14.800 9.800 0L12 24z" fill="#2ba24c" />
    <path d="M16.900 14.800 12 24q9-.4 11.500-8.500z" fill="#fbc116" />
    <path d="M1.600 6 7.100 15q2 3 6 2.500L12 24Q4 24 .8 16.500-1.200 11 1.600 6z" fill="#2ba24c" />
    <circle cx="12" cy="12" r="5.600" fill="#fff" /><circle cx="12" cy="12" r="4.400" fill="#3b79ea" />
  </svg>
);
const FolderIcon = () => (
  <svg width="22" height="20" viewBox="0 0 22 20"><path d="M0 1h8l1.500 2H22v14H0z" fill="#d99b1c" /><path d="M0 4h22v14H0z" fill="#fbd267" /><path d="M4 19v-7q0-1 1-1h12q1 0 1 1v7h-4v-3.500H8V19z" fill="#3c8ed3" /></svg>
);
const AnthropicIcon = () => (
  <svg width="20" height="20" viewBox="0 0 20 20"><rect width="20" height="20" rx="4" fill="#f5f5f1" /><path d="m3.500 14 3.400-8.500h2L12.300 14M4.800 11h6M11.500 5.500 15.700 14" fill="none" stroke="#111" strokeWidth="1.900" /></svg>
);
const WhaleIcon = () => (
  <svg width="24" height="19" viewBox="0 0 24 19">
    <path d="M2 5Q7 2 11.500 4.600l2.800 2.100q-.4-2.700 1.200-4.200.3 2.200 2.200 2.200 2.200-.2 3-2 1.400.6 2.800 0-.2 4.300-4.500 5.300-.5 4.500-3.600 7 2.400.6 3 1.900-4.300.7-6.200-.6Q3.500 18 1 12-.3 8 2 5z" fill="#4c6bfb" />
    <path d="M3.600 7.500q4.700-.2 8.100 5.200 1.500 2.500-.3 2.200-2.400-.9-4-3-2-2-3.800-4.400z" fill="#304032" /><path d="M11.500 8q2.900.2 3.700 3-1.200 1-1.800-.5z" fill="#304032" />
  </svg>
);
const VsCodeIcon = () => (
  <svg width="24" height="24" viewBox="0 0 24 24"><path d="m.8 8 2-1.700L18 18.500V24L.8 9.500z" fill="#0878bf" /><path d="m.8 16 2 1.700L18 5.500V0L.8 14.500z" fill="#1087cf" /><path d="M17.500 0 24 3v18l-6.500 3-1-1.200V1.200z" fill="#2ba7ec" /></svg>
);
const MailIcon = () => (
  <svg width="20" height="20" viewBox="0 0 20 20"><rect width="20" height="20" rx="4" fill="#fff" /><g fill="none" strokeWidth="1.200"><path d="M4 8.500 10 3.500l6 5V16H4z" stroke="#3c72b8" /><path d="m4 9 6 5 6-5" stroke="#3c72b8" /><path d="M5 11q0-2.500 5-2.500T15 11" stroke="#eaa752" /></g></svg>
);
const NotepadIcon = () => (
  <svg width="24" height="22" viewBox="0 0 24 22"><path d="m7 1 14 1 1 17-5 2.500-2-3z" fill="#d7d4c7" /><path d="M7.500 1.500 20 2.200 14.500 20.500 1.500 17.500z" fill="#79b9c4" /><path d="m7.500 1.500 12.500.7-1.300 4L6 6z" fill="#b9e2e6" /><path d="m1.500 17.500 4-9 8 9.500.9 2.500z" fill="#a8d8dd" /><path d="m8 1 12 .8" stroke="#707b7c" strokeWidth="1.300" strokeDasharray="1 1" /></svg>
);

function DesktopBar() {
  return (
    <Taskbar>
      <StartCell><svg width="16" height="16" viewBox="0 0 16 16" fill="#fff"><path d="M0 2.300 6.600 1.400V7.600H0zM7.400 1.300 16 0V7.600H7.400zM0 8.400H6.600V14.600L0 13.700zM7.400 8.400H16V16L7.400 14.800z" /></svg></StartCell>
      <SearchBox>
        <svg width="17" height="17" viewBox="0 0 17 17" fill="none" stroke="#eee" strokeWidth="1.200"><circle cx="10.700" cy="6.200" r="5.500" /><path d="M6.800 10.200.8 16.300" /></svg>
        <Fit w={128} size={14}>Type here to search</Fit>
        <svg width="62" height="26" viewBox="0 0 62 26">
          <path d="M24.500 2q1.500 8 10.500 11-9 2.500-10.500 10.500Q22.500 15.500 14 13q8.500-3 10.500-11z" fill="#ffd12e" stroke="#f9c425" strokeWidth="2.500" strokeLinejoin="round" /><path d="M47 11.500q1 4.500 5 5.500-4 1-5 5-1-4-5-5 4-1 5-5.500z" fill="#ffc62a" stroke="#ffc62a" strokeLinejoin="round" />
          <path d="M4 16.500q2 2.500 5 2.500-2.500 2-2.500 5.500Q4.500 22 1 22.500 3.500 20 4 16.500z" fill="#20a8ee" /><circle cx="41" cy="3" r="2.200" fill="#f0672c" /><circle cx="59" cy="23" r="2.200" fill="#81c946" />
        </svg>
      </SearchBox>
      <TaskView><svg width="17" height="16" viewBox="0 0 17 16" fill="none" stroke="#fff" strokeWidth="1.200"><path d="M1 .5v3h10v-3M1 15.500v-3h10v3M1 5.500h10v5H1zM15 0v3M15 8v8" /><path d="M13.800 4h2.600v2.600h-2.600z" fill="#fff" stroke="none" /></svg></TaskView>
      <AppCell $open $active><EdgeIcon extra="user" /></AppCell>
      <AppCell $open><ChromeIcon /></AppCell>
      <AppCell><EdgeIcon extra="case" /></AppCell>
      <AppCell $open $split><FolderIcon /></AppCell>
      <AppCell $open><AnthropicIcon /></AppCell>
      <AppCell $open><FaWhatsapp size={27} color="#28d366" /><AppBadge $x={27}>35</AppBadge></AppCell>
      <AppCell $open><WhaleIcon /></AppCell>
      <AppCell $open><VsCodeIcon /></AppCell>
      <AppCell><MailIcon /><AppBadge $x={27}>4</AppBadge></AppCell>
      <AppCell $open><NotepadIcon /></AppCell>
      <Tray>
        <svg width="25" height="24" viewBox="0 0 25 24">
          <path d="M10 1q-1 6 4 9 2 1 4 .8-2 5-8 4.800-6-.5-8.500-4.600Q9.500 9 10 1z" fill="#f5ad32" /><path d="M5 23q-4.500-.5-4.800-4 .3-4 4.300-4.300Q6.500 11 10.500 11.500q3 .5 4 2.500 4-2 6.500 2 4 .8 3.500 4-.8 2.800-3.500 3z" fill="#b6d4f6" /><path d="M1 20q10 1 23.500-.5-.5 3.300-3.500 3.500H5q-3 0-4-3z" fill="#91b9ee" /><circle cx="18.500" cy="6" r="5.500" fill="#c6322b" /><text x="18.500" y="8.800" textAnchor="middle" fontSize="8" fontWeight="700" fill="#fff">3</text>
        </svg>
        <TrayItem $ml={7}><Fit w={30} size={13.500}>19°C</Fit></TrayItem>
        <TrayItem $ml={8}><Fit w={87} size={13.500}>Mostly cloudy</Fit></TrayItem>
        <TrayItem $ml={24}><svg width="12" height="7" viewBox="0 0 12 7" fill="none" stroke="#fff" strokeWidth="1.300"><path d="M.5 6.500 6 1l5.500 5.500" /></svg></TrayItem>
        <TrayItem $ml={10}><svg width="16" height="12" viewBox="0 0 16 12" fill="none" stroke="#fff"><path d="M5.500 3.500h9v7h-10V6M15.500 5.500v3M1.500 0v2M4.500 0v2M.5 2.500h5v2l-1.500 1.500h-2L.5 4.500zM3 6v4.500h2" /><path d="M7 5.500h6v3H7z" fill="#fff" /></svg></TrayItem>
        <TrayItem $ml={11}><svg width="13" height="13" viewBox="0 0 13 13" fill="none" stroke="#d8ddd8" strokeWidth="1.100"><path d="M.7 11.500Q1 2 12.500 1.500M3.800 12Q4 5 12.500 4.500M6.800 12Q7 8 12.500 7.500" /><circle cx="11.300" cy="11.200" r="1.300" fill="#fff" stroke="none" /></svg></TrayItem>
        <TrayItem $ml={8}><svg width="17" height="14" viewBox="0 0 17 14" fill="none" stroke="#fff"><path d="M.7 4.700h2.500L6.500 1.500v11L3.200 9.300H.7zM9 5q1.200 2 0 4" /><path d="M11.200 3.300q2.200 3.700 0 7.400M13.600 1.500q3.600 5.500 0 11" stroke="#98a198" /></svg></TrayItem>
        <TrayItem $ml={9}><Fit w={23} size={11.500}>ENG</Fit></TrayItem>
        <TrayItem $ml={12}><Fit w={27} size={11.500}>19:09</Fit><Fit w={59} size={11.500}>2025/10/16</Fit></TrayItem>
        <TrayItem $ml={17}><svg width="17" height="17" viewBox="0 0 17 17" fill="none" stroke="#fff" strokeWidth="1.200"><path d="M.8 1.500h15.400v11h-4.700l-3 3-3-3H.8z" /></svg></TrayItem>
        <PeekLine />
      </Tray>
    </Taskbar>
  );
}

export default function App() {
  return (
    <Screen>
      <Global />
      <BrowserChrome />
      <Window>
        <Page>
          <SiteNav />
          <Content>
            <TrackingCard />
            <Side><OrderCard /><DriverCard /></Side>
          </Content>
        </Page>
        <Scrollbar>
          <svg width="9" height="5" viewBox="0 0 9 5" fill="#a5a5a5"><path d="M4.500 0 9 5H0z" /></svg>
          <ScrollThumb />
          <svg width="9" height="5" viewBox="0 0 9 5" fill="#a5a5a5"><path d="M4.500 5 9 0H0z" /></svg>
        </Scrollbar>
      </Window>
      <DesktopBar />
    </Screen>
  );
}
